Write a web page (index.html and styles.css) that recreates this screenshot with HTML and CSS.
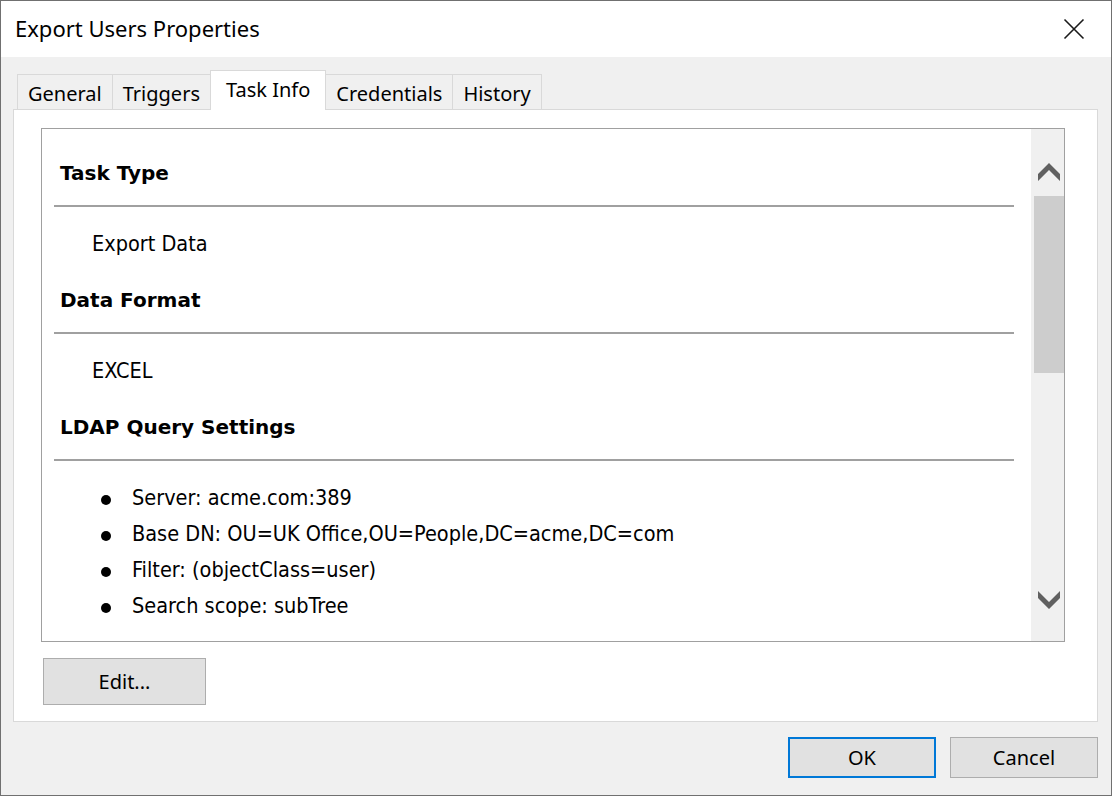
FILE: index.html
```html
<!DOCTYPE html>
<html>
<head>
<meta charset="utf-8">
<title>Export Users Properties</title>
<link rel="stylesheet" href="styles.css">
</head>
<body>
<div class="window">
  <div class="titlebar">
    <span class="title">Export Users Properties</span>
    <button class="close" aria-label="Close">
      <svg width="22" height="22" viewBox="0 0 22 22"><path d="M1.5 1.5 L20.5 20.5 M20.5 1.5 L1.5 20.5" stroke="#1a1a1a" stroke-width="1.6" fill="none"/></svg>
    </button>
  </div>
  <div class="client">
    <div class="tabs">
      <div class="tab">General</div>
      <div class="tab">Triggers</div>
      <div class="tab active">Task Info</div>
      <div class="tab">Credentials</div>
      <div class="tab">History</div>
    </div>
    <div class="panel">
      <div class="infobox">
        <div class="content">
          <h2 class="heading">Task Type</h2>
          <hr class="rule">
          <p class="value">Export Data</p>
          <h2 class="heading">Data Format</h2>
          <hr class="rule">
          <p class="value">EXCEL</p>
          <h2 class="heading">LDAP Query Settings</h2>
          <hr class="rule">
          <ul class="bullets">
            <li>Server: acme.com:389</li>
            <li>Base DN: OU=UK Office,OU=People,DC=acme,DC=com</li>
            <li>Filter: (objectClass=user)</li>
            <li>Search scope: subTree</li>
          </ul>
        </div>
        <div class="scrollbar">
          <svg class="arrow up" width="24" height="18" viewBox="0 0 24 18"><polygon points="12,0 23,11 23,18 12,7 1,18 1,11" fill="#606060"/></svg>
          <div class="thumb"></div>
          <div class="spacer"></div>
          <svg class="arrow down" width="24" height="18" viewBox="0 0 24 18"><polygon points="12,18 23,7 23,0 12,11 1,0 1,7" fill="#606060"/></svg>
        </div>
      </div>
      <button class="btn edit">Edit...</button>
    </div>
    <div class="footer">
      <button class="btn ok">OK</button>
      <button class="btn cancel">Cancel</button>
    </div>
  </div>
</div>
</body>
</html>
```
FILE: styles.css
```css
* { box-sizing: border-box; }
html, body { margin: 0; padding: 0; }
body {
  width: 1112px;
  height: 796px;
  overflow: hidden;
  background: #f0f0f0;
  font-family: "Noto Sans", "Open Sans", sans-serif;
  color: #000;
}
.window {
  width: 1112px;
  height: 796px;
  border: 1px solid #707070;
  display: flex;
  flex-direction: column;
  background: #f0f0f0;
}
.titlebar {
  height: 56px;
  background: #fff;
  display: flex;
  align-items: center;
  justify-content: space-between;
  padding-left: 14px;
  flex: none;
}
.title {
  font-size: 22px;
  padding-bottom: 2px;
}
.close {
  width: 72px;
  height: 56px;
  border: none;
  background: transparent;
  display: flex;
  align-items: center;
  justify-content: center;
  padding: 0;
  margin-right: 1px;
}
.client {
  flex: 1;
  display: flex;
  flex-direction: column;
  padding: 13px 13px 0 12px;
}
.tabs {
  display: flex;
  align-items: flex-end;
  height: 39px;
  padding-left: 4px;
  position: relative;
  z-index: 1;
}
.tab {
  height: 35px;
  border: 1px solid #d9d9d9;
  border-bottom: none;
  background: #f0f0f0;
  font-size: 20px;
  padding: 3px 10px 0 10px;
  display: flex;
  align-items: center;
  margin-left: -1px;
}
.tab:first-child { margin-left: 0; }
.tab.active {
  height: 40px;
  margin-bottom: -1px;
  background: #fff;
  padding: 0 15px 2px 15px;
}
.panel {
  height: 613px;
  background: #fff;
  border: 1px solid #d9d9d9;
  padding: 18px 31px 0 27px;
  display: flex;
  flex-direction: column;
  align-items: flex-start;
}
.infobox {
  width: 1024px;
  height: 514px;
  border: 1px solid #a0a0a0;
  display: flex;
  overflow: hidden;
}
.content {
  flex: 1;
  padding: 32px 17px 0 12px;
  font-family: "DejaVu Sans Condensed", "DejaVu Sans", sans-serif;
  font-size: 21.5px;
}
.heading {
  margin: 0;
  padding-left: 6px;
  font-family: "DejaVu Sans", sans-serif;
  font-size: 20px;
  line-height: 24px;
  font-weight: bold;
}
.rule {
  margin: 20px 0 0 0;
  border: none;
  height: 2px;
  background: #a0a0a0;
}
.value {
  margin: 25px 0 32px 0;
  padding-left: 38px;
  line-height: 24px;
}
.bullets {
  margin: 19px 0 0 0;
  padding-left: 78px;
  line-height: 36px;
  list-style: none;
}
.bullets li {
  position: relative;
}
.bullets li::before {
  content: "";
  position: absolute;
  left: -31px;
  top: 15px;
  width: 10px;
  height: 10px;
  border-radius: 50%;
  background: #000;
}
.scrollbar {
  width: 33px;
  background: #f0f0f0;
  display: flex;
  flex-direction: column;
  align-items: center;
  flex: none;
}
.arrow { display: block; flex: none; margin-left: 2px; }
.arrow.up { margin-top: 34px; }
.arrow.down { margin-bottom: 32px; }
.thumb {
  width: 30px;
  height: 177px;
  margin-top: 15px;
  margin-left: 2px;
  background: #cdcdcd;
  flex: none;
}
.spacer { flex: 1; }
.btn {
  font-family: "Noto Sans", "Open Sans", sans-serif;
  font-size: 20px;
  color: #000;
  background: #e1e1e1;
  border: 1px solid #adadad;
  padding: 0;
}
.edit {
  width: 163px;
  height: 47px;
  margin: 16px 0 0 2px;
}
.footer {
  display: flex;
  justify-content: flex-end;
  gap: 14px;
  padding: 15px 0 0 0;
}
.footer .btn {
  width: 148px;
  height: 41px;
}
.ok {
  border: 2px solid #0078d7 !important;
}
```
